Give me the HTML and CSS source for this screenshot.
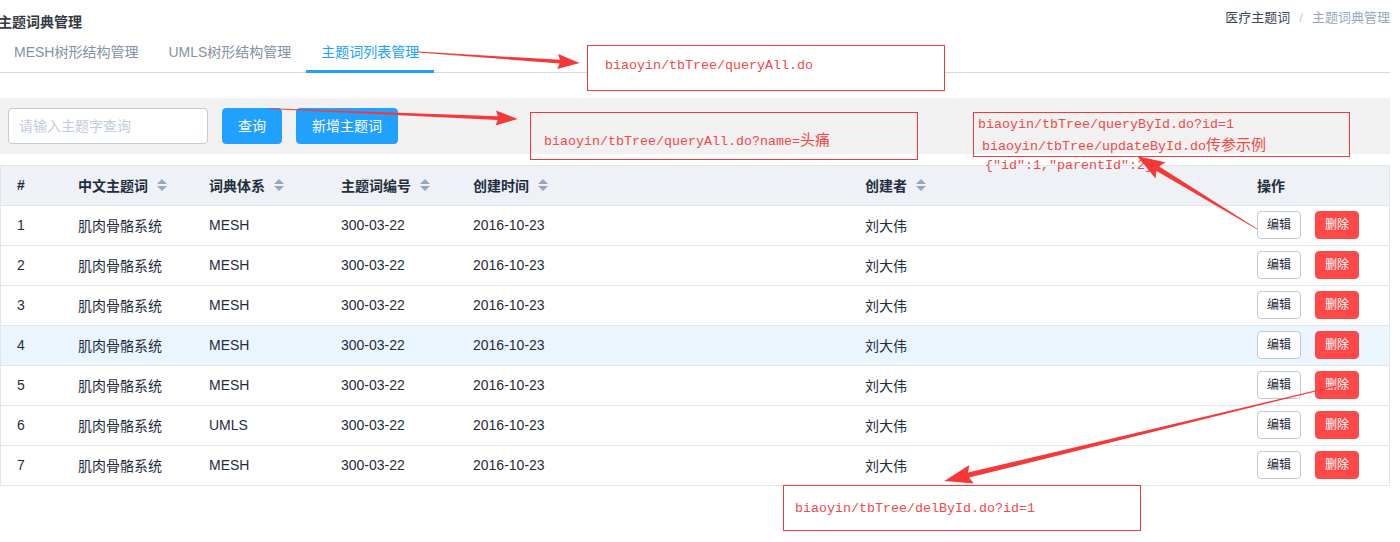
FILE: index.html
```html
<!DOCTYPE html>
<html lang="zh-CN">
<head>
<meta charset="utf-8">
<title>主题词典管理</title>
<link rel="stylesheet" href="styles.css">
</head>
<body>
<div class="page">
  <header class="topbar">
    <h1 class="title">主题词典管理</h1>
    <nav class="crumbs"><span class="crumb-link">医疗主题词</span><span class="crumb-sep">/</span><span class="crumb-cur">主题词典管理</span></nav>
  </header>

  <div class="tabs">
    <div class="tab">MESH树形结构管理</div>
    <div class="tab">UMLS树形结构管理</div>
    <div class="tab active">主题词列表管理</div>
  </div>

  <div class="search">
    <input class="search-input" type="text" placeholder="请输入主题字查询">
    <button class="btn btn-primary">查询</button>
    <button class="btn btn-primary">新增主题词</button>
  </div>

  <div class="grid">
    <div class="row head">
      <div class="cell first">#</div>
      <div class="cell">中文主题词<span class="sort"><i class="up"></i><i class="down"></i></span></div>
      <div class="cell">词典体系<span class="sort"><i class="up"></i><i class="down"></i></span></div>
      <div class="cell">主题词编号<span class="sort"><i class="up"></i><i class="down"></i></span></div>
      <div class="cell">创建时间<span class="sort"><i class="up"></i><i class="down"></i></span></div>
      <div class="cell">创建者<span class="sort"><i class="up"></i><i class="down"></i></span></div>
      <div class="cell">操作</div>
    </div>
    <div class="row">
      <div class="cell first">1</div><div class="cell">肌肉骨骼系统</div><div class="cell">MESH</div><div class="cell">300-03-22</div><div class="cell">2016-10-23</div><div class="cell">刘大伟</div>
      <div class="cell ops"><button class="sbtn">编辑</button><button class="sbtn danger">删除</button></div>
    </div>
    <div class="row">
      <div class="cell first">2</div><div class="cell">肌肉骨骼系统</div><div class="cell">MESH</div><div class="cell">300-03-22</div><div class="cell">2016-10-23</div><div class="cell">刘大伟</div>
      <div class="cell ops"><button class="sbtn">编辑</button><button class="sbtn danger">删除</button></div>
    </div>
    <div class="row">
      <div class="cell first">3</div><div class="cell">肌肉骨骼系统</div><div class="cell">MESH</div><div class="cell">300-03-22</div><div class="cell">2016-10-23</div><div class="cell">刘大伟</div>
      <div class="cell ops"><button class="sbtn">编辑</button><button class="sbtn danger">删除</button></div>
    </div>
    <div class="row hover">
      <div class="cell first">4</div><div class="cell">肌肉骨骼系统</div><div class="cell">MESH</div><div class="cell">300-03-22</div><div class="cell">2016-10-23</div><div class="cell">刘大伟</div>
      <div class="cell ops"><button class="sbtn">编辑</button><button class="sbtn danger">删除</button></div>
    </div>
    <div class="row">
      <div class="cell first">5</div><div class="cell">肌肉骨骼系统</div><div class="cell">MESH</div><div class="cell">300-03-22</div><div class="cell">2016-10-23</div><div class="cell">刘大伟</div>
      <div class="cell ops"><button class="sbtn">编辑</button><button class="sbtn danger">删除</button></div>
    </div>
    <div class="row">
      <div class="cell first">6</div><div class="cell">肌肉骨骼系统</div><div class="cell">UMLS</div><div class="cell">300-03-22</div><div class="cell">2016-10-23</div><div class="cell">刘大伟</div>
      <div class="cell ops"><button class="sbtn">编辑</button><button class="sbtn danger">删除</button></div>
    </div>
    <div class="row">
      <div class="cell first">7</div><div class="cell">肌肉骨骼系统</div><div class="cell">MESH</div><div class="cell">300-03-22</div><div class="cell">2016-10-23</div><div class="cell">刘大伟</div>
      <div class="cell ops"><button class="sbtn">编辑</button><button class="sbtn danger">删除</button></div>
    </div>
  </div>
</div>

<div class="note note-1">biaoyin/tbTree/queryAll.do</div>
<div class="note note-2">biaoyin/tbTree/queryAll.do?name=<span class="cjk">头痛</span></div>
<div class="note note-3">
  <div class="l1">biaoyin/tbTree/queryById.do?id=1</div>
  <div class="l2">biaoyin/tbTree/updateById.do<span class="cjk">传参示例</span></div>
  <div class="l3">{"id":1,"parentId":2}</div>
</div>
<div class="note note-4">biaoyin/tbTree/delById.do?id=1</div>

<svg class="arrows" width="1400" height="542" viewBox="0 0 1400 542">
  <g transform="translate(418 52) rotate(3.88)">
    <polygon points="0,-0.4 142,-1.8 140,-7.5 162,0 140,7.5 142,1.8 0,0.4"/>
  </g>
  <g transform="translate(270 108.7) rotate(2.37)">
    <polygon points="0,-0.4 228,-1.8 226,-7.5 248,0 226,7.5 228,1.8 0,0.4"/>
  </g>
  <g transform="translate(1257 229) rotate(-148.7)">
    <polygon points="0,-0.4 116,-2.6 113,-9.5 140,0 113,9.5 116,2.6 0,0.4"/>
  </g>
  <g transform="translate(1336 386) rotate(166.38)">
    <polygon points="0,-0.4 378,-2.6 375,-9.5 403,0 375,9.5 378,2.6 0,0.4"/>
  </g>
</svg>
</body>
</html>
```

FILE: styles.css
```css
html, body {
  margin: 0;
  padding: 0;
  background: #ffffff;
}

body {
  position: relative;
  width: 1400px;
  height: 542px;
  overflow: hidden;
  font-family: "Liberation Sans", "Noto Sans CJK SC", sans-serif;
  color: #1f2d3d;
}

.page {
  width: 1390px;
}

/* header */
.topbar {
  display: flex;
  justify-content: space-between;
  align-items: flex-start;
  height: 32px;
}

.title {
  margin: 14px 0 0 -2px;
  font-size: 14px;
  line-height: 16px;
  font-weight: bold;
  color: #333a44;
}

.crumbs {
  margin-top: 10px;
  font-size: 13px;
  line-height: 16px;
  display: flex;
}

.crumb-link {
  color: #3b4656;
}

.crumb-sep {
  color: #bfcbd9;
  margin: 0 9px;
}

.crumb-cur {
  color: #97a8be;
}

/* tabs */
.tabs {
  display: flex;
  height: 40px;
  margin-left: -1px;
  border-bottom: 1px solid #d1dbe5;
}

.tab {
  position: relative;
  padding: 0 15px;
  line-height: 40px;
  font-size: 14px;
  color: #8391a5;
}

.tab.active {
  color: #20a0ff;
}

.tab.active::after {
  content: "";
  position: absolute;
  left: 0;
  right: 0;
  bottom: -1px;
  height: 3px;
  background: #20a0ff;
}

/* search */
.search {
  margin-top: 25px;
  height: 56px;
  box-sizing: border-box;
  padding: 10px 8px;
  background: #f1f1f1;
  display: flex;
  gap: 14px;
}

.search-input {
  width: 200px;
  height: 36px;
  box-sizing: border-box;
  border: 1px solid #bfcbd9;
  border-radius: 4px;
  padding: 0 10px;
  font-family: inherit;
  font-size: 14px;
  color: #1f2d3d;
  background: #fff;
  outline: none;
}

.search-input::placeholder {
  color: #c2cbd8;
}

.btn {
  height: 36px;
  box-sizing: border-box;
  padding: 0 15px;
  border: 1px solid #20a0ff;
  border-radius: 4px;
  font-family: inherit;
  font-size: 14px;
  line-height: 34px;
}

.btn-primary {
  background: #20a0ff;
  color: #fff;
}

/* table */
.grid {
  margin-top: 11px;
  width: 1390px;
  box-sizing: border-box;
  border: 1px solid #dfe6ec;
  border-bottom: none;
}

.row {
  display: grid;
  grid-template-columns: 59px 131px 132px 132px 392px 392px 1fr;
  height: 40px;
  box-sizing: border-box;
  padding-bottom: 2px;
  border-bottom: 1px solid #dfe6ec;
  align-items: center;
  font-size: 14px;
  color: #1f2d3d;
}

.row.head {
  background: #eef1f6;
  font-weight: bold;
}

.row.hover {
  background: #eaf5ff;
}

.cell {
  padding: 0 18px;
  white-space: nowrap;
  display: flex;
  align-items: center;
}

.cell.first {
  padding-left: 16px;
}

.sort {
  display: inline-flex;
  flex-direction: column;
  gap: 2px;
  margin-left: 9px;
}

.sort i {
  display: block;
  width: 0;
  height: 0;
  border-left: 5px solid transparent;
  border-right: 5px solid transparent;
}

.sort .up {
  border-bottom: 5px solid #97a8be;
}

.sort .down {
  border-top: 5px solid #97a8be;
}

.ops {
  gap: 14px;
}

.sbtn {
  height: 28px;
  box-sizing: border-box;
  padding: 0 9px;
  border: 1px solid #c4c9d1;
  border-radius: 4px;
  background: #fff;
  color: #1f2d3d;
  font-family: inherit;
  font-size: 12px;
  line-height: 26px;
}

.sbtn.danger {
  background: #ff4949;
  border-color: #ff4949;
  color: #fff;
}

/* annotations */
.note {
  position: absolute;
  box-sizing: border-box;
  border: 1px solid #f23a3a;
  font-family: "Liberation Mono", "Noto Sans CJK SC", monospace;
  font-size: 13.33px;
  line-height: 16px;
  color: #f24848;
  white-space: nowrap;
}

.note .cjk {
  font-family: "Noto Sans CJK SC", sans-serif;
  font-size: 15px;
  line-height: 16px;
}

.note-1 {
  left: 587px;
  top: 45px;
  width: 358px;
  height: 46px;
  padding: 12px 0 0 17px;
  background: #fff;
}

.note-2 {
  left: 530px;
  top: 112px;
  width: 388px;
  height: 48px;
  padding: 18px 0 0 13px;
}

.note-3 {
  left: 973px;
  top: 112px;
  width: 377px;
  height: 45px;
  padding-top: 2px;
  line-height: 19px;
}

.note-3 .cjk {
  line-height: 19px;
}

.note-3 .l1 { padding-left: 4px; }
.note-3 .l2 { padding-left: 8px; }
.note-3 .l3 { padding-left: 11px; }

.note-4 {
  left: 783px;
  top: 485px;
  width: 358px;
  height: 46px;
  padding: 15px 0 0 11px;
}

.arrows {
  position: absolute;
  left: 0;
  top: 0;
  pointer-events: none;
}

.arrows polygon {
  fill: #f63838;
}
```
